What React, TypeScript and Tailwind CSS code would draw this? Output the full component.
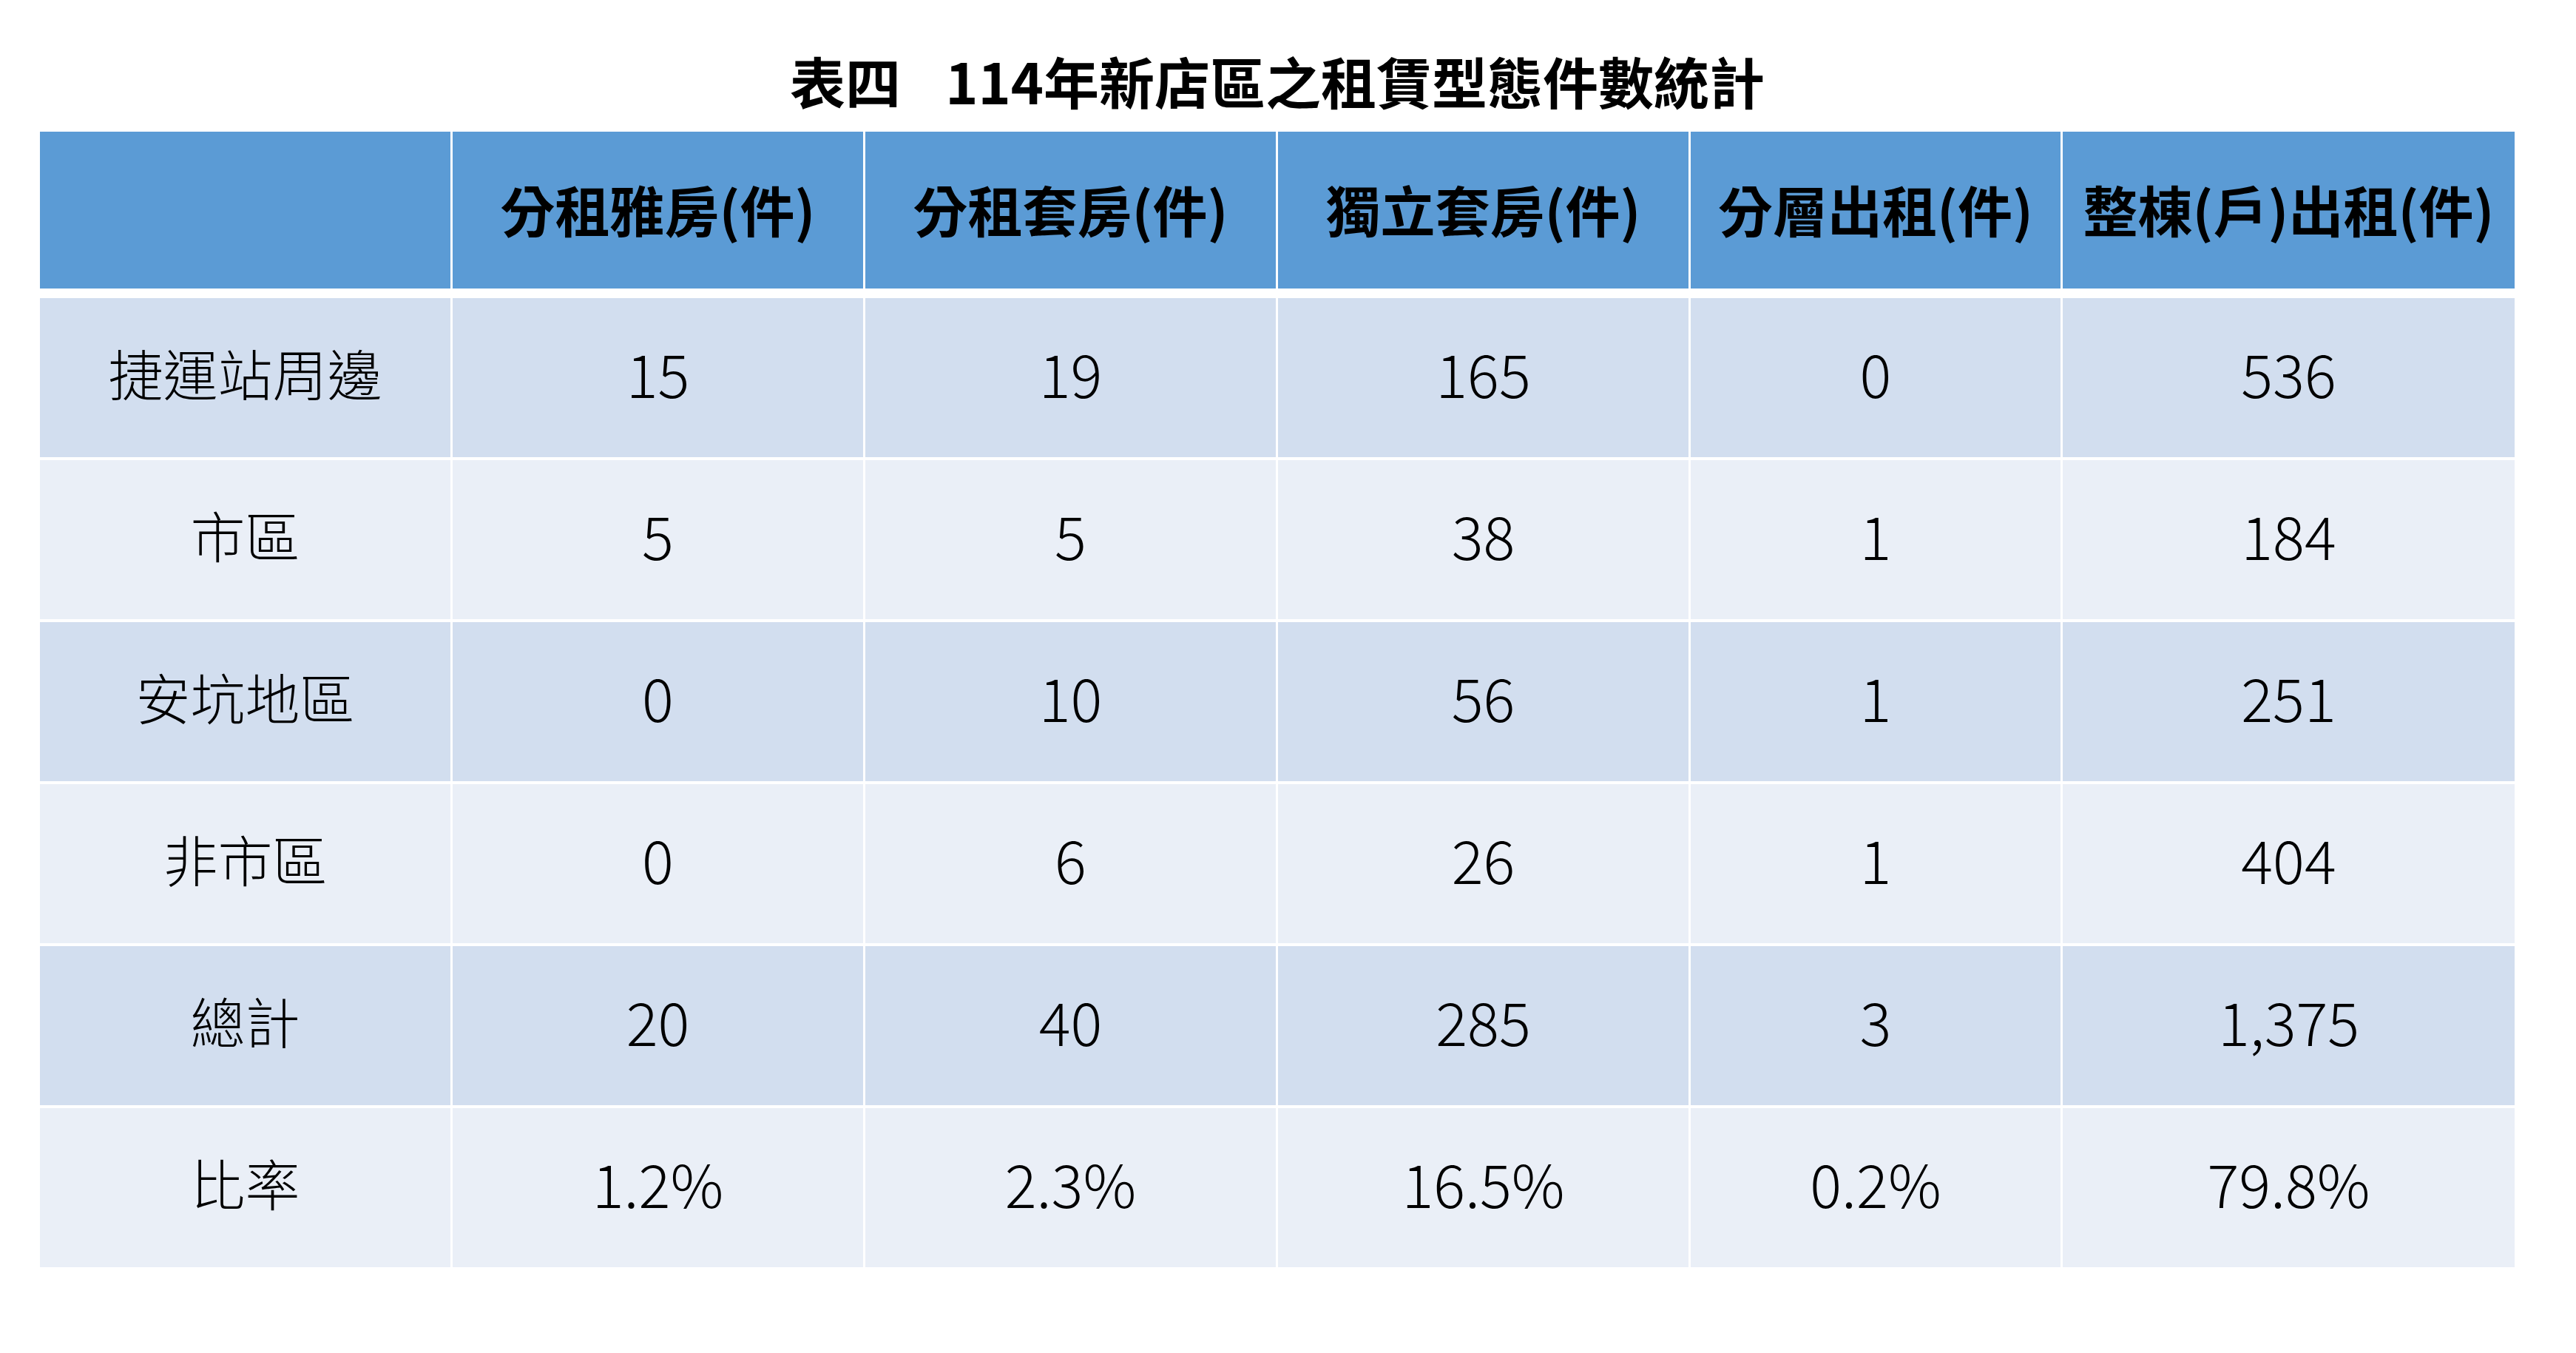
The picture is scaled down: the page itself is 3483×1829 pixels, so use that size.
const headers = ['', '分租雅房(件)', '分租套房(件)', '獨立套房(件)', '分層出租(件)', '整棟(戶)出租(件)']

const rows = [
  ['捷運站周邊', '15', '19', '165', '0', '536'],
  ['市區', '5', '5', '38', '1', '184'],
  ['安坑地區', '0', '10', '56', '1', '251'],
  ['非市區', '0', '6', '26', '1', '404'],
  ['總計', '20', '40', '285', '3', '1,375'],
  ['比率', '1.2%', '2.3%', '16.5%', '0.2%', '79.8%'],
]

const font = { fontFamily: '"Noto Sans CJK TC", "Noto Sans", sans-serif' }

function App() {
  return (
    <div style={font} className='w-[3483px] h-[1829px] bg-white text-black pl-[54px] pr-[83px]'>
      <div className='h-[178px] pt-[72px]'>
        <h1 className='text-center text-[75px] leading-[74px] font-bold'>
          表四<span className='inline-block w-[60px]'></span>114年新店區之租賃型態件數統計
        </h1>
      </div>

      <div className='grid grid-cols-[555px_555px_555px_555px_500px_611px] gap-x-[3px] mb-[13px]'>
        {headers.map((h, i) => (
          <div key={i} className='h-[212px] pb-[4px] bg-[#5b9bd5] flex items-center justify-center text-[74px] font-bold leading-none'>
            {h}
          </div>
        ))}
      </div>

      <div className='flex flex-col gap-y-[4px]'>
        {rows.map((r, ri) => (
          <div key={ri} className='grid grid-cols-[555px_555px_555px_555px_500px_611px] gap-x-[3px]'>
            {r.map((c, ci) => (
              <div
                key={ci}
                className={
                  'h-[215px] pb-[16px] flex items-center justify-center font-light leading-none ' +
                  (ci === 0 ? 'text-[74px] ' : 'text-[80px] ') +
                  (ri % 2 === 0 ? 'bg-[#d2deef]' : 'bg-[#eaeff7]')
                }
              >
                {c}
              </div>
            ))}
          </div>
        ))}
      </div>
    </div>
  )
}

export default App
